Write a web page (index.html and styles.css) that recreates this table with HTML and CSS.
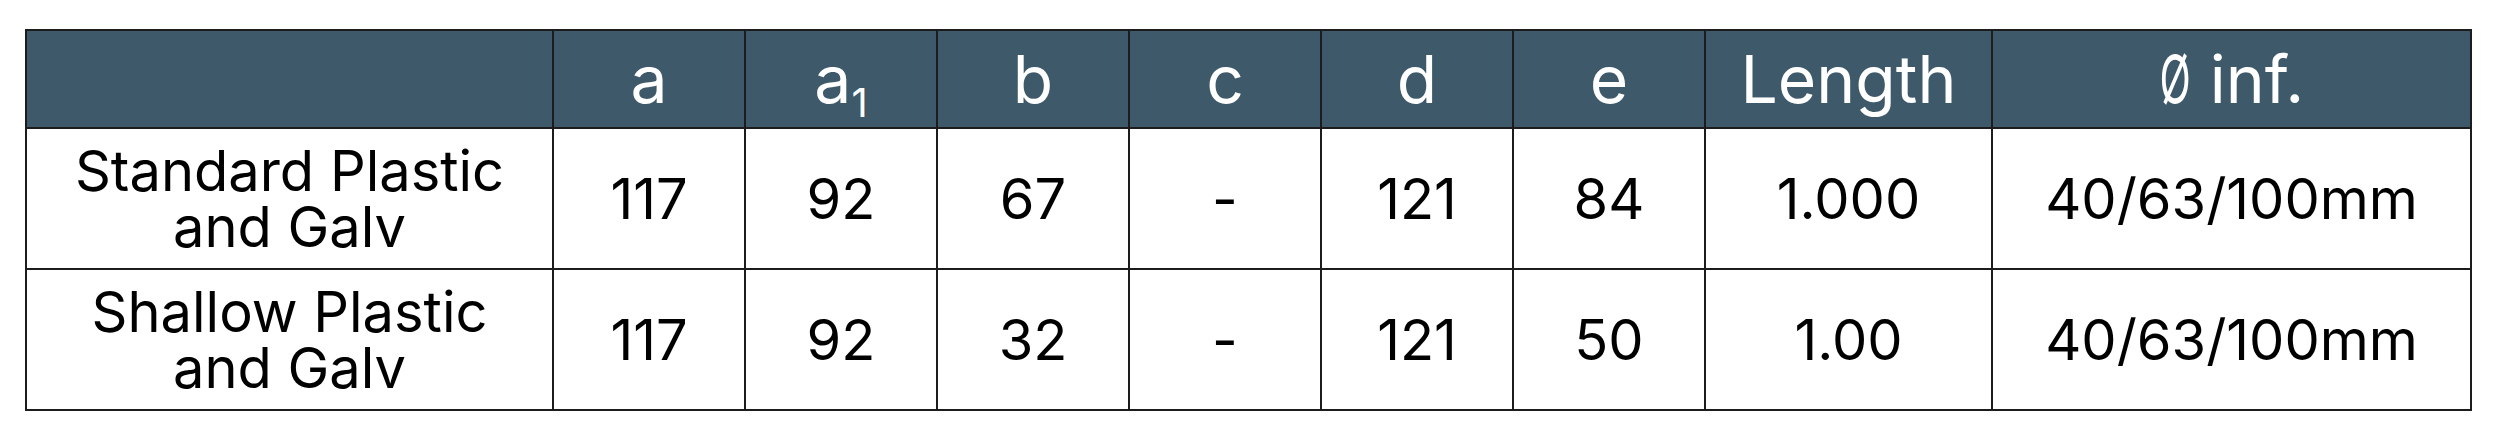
FILE: index.html
```html
<!DOCTYPE html>
<html lang="en">
<head>
<meta charset="utf-8">
<title>Dimensions table</title>
<link rel="stylesheet" href="styles.css">
</head>
<body>
<table class="spec">
  <colgroup>
    <col class="c-name">
    <col class="c-num"><col class="c-num"><col class="c-num"><col class="c-num"><col class="c-num"><col class="c-num">
    <col class="c-len">
    <col class="c-dia">
  </colgroup>
  <thead>
    <tr>
      <th></th>
      <th>a</th>
      <th>a<sub>1</sub></th>
      <th>b</th>
      <th>c</th>
      <th>d</th>
      <th>e</th>
      <th>Length</th>
      <th><span class="diam">Ø</span> inf.</th>
    </tr>
  </thead>
  <tbody>
    <tr>
      <td class="name">Standard Plastic<br>and Galv</td>
      <td>117</td><td>92</td><td>67</td><td>-</td><td>121</td><td>84</td><td>1.000</td><td>40/63/100mm</td>
    </tr>
    <tr>
      <td class="name">Shallow Plastic<br>and Galv</td>
      <td>117</td><td>92</td><td>32</td><td>-</td><td>121</td><td>50</td><td>1.00</td><td>40/63/100mm</td>
    </tr>
  </tbody>
</table>
</body>
</html>
```

FILE: styles.css
```css
html, body {
  margin: 0;
  padding: 0;
  background: #ffffff;
}

body {
  padding: 29px 0 0 25px;
  font-family: "Inter", "Roboto", "Liberation Sans", sans-serif;
}

.spec {
  border-collapse: collapse;
  table-layout: fixed;
  width: 2447px;
}

.c-name { width: 527px; }
.c-num { width: 192px; }
.c-len { width: 287px; }
.c-dia { width: 479px; }

.spec th,
.spec td {
  border: 2px solid #1c1c1c;
  text-align: center;
  vertical-align: middle;
  padding: 0;
}

.spec th {
  height: 96px;
  background: #3d596a;
  color: #ffffff;
  font-weight: 400;
  font-size: 66px;
  line-height: 1;
}

.spec th sub {
  font-size: 40px;
  vertical-align: -0.35em;
  line-height: 0;
}

.diam {
  display: inline-block;
  transform: scaleX(0.62);
  margin: 0 -9px;
}

.spec td {
  height: 139px;
  color: #000000;
  font-size: 56px;
  line-height: 56px;
}
```
